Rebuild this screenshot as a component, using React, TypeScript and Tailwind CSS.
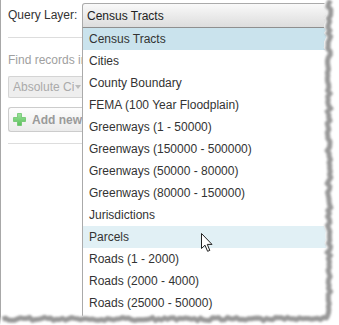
import React from "react";

const items = [
  "Census Tracts",
  "Cities",
  "County Boundary",
  "FEMA (100 Year Floodplain)",
  "Greenways (1 - 50000)",
  "Greenways (150000 - 500000)",
  "Greenways (50000 - 80000)",
  "Greenways (80000 - 150000)",
  "Jurisdictions",
  "Parcels",
  "Roads (1 - 2000)",
  "Roads (2000 - 4000)",
  "Roads (25000 - 50000)",
];

function rand(seed: number) {
  const x = Math.sin(seed * 12.9898) * 43758.5453;
  return x - Math.floor(x);
}

const RX = 325;
const BY = 316;
const rightPts: [number, number][] = [];
for (let y = 0; y <= BY; y += 3) rightPts.push([RX + (rand(y + 1) - 0.5) * 3.5, y]);
const bottomPts: [number, number][] = [];
for (let x = RX; x >= 0; x -= 3) bottomPts.push([x, BY + (rand(x + 500) - 0.5) * 3]);
const edge = [...rightPts, ...bottomPts];
const edgeStr = edge.map((p) => `${p[0].toFixed(1)},${p[1].toFixed(1)}`).join(" ");
const shadowStr = edge
  .map((p, i) => {
    const isRight = i < rightPts.length;
    return `${(p[0] + (isRight ? 4 : 1.5)).toFixed(1)},${(p[1] + (isRight ? 0.5 : 3)).toFixed(1)}`;
  })
  .join(" ");
const outside = `339,0 ${edgeStr} 0,325 339,325`;

function TornEdge() {
  return (
    <svg className="absolute left-0 top-0 pointer-events-none" width="339" height="325" viewBox="0 0 339 325">
      <defs>
        <filter id="blur" x="-10%" y="-10%" width="120%" height="120%">
          <feGaussianBlur stdDeviation="0.9" />
        </filter>
      </defs>
      <polygon points={outside} fill="#ffffff" />
      <polyline points={shadowStr} fill="none" stroke="#999999" strokeWidth="5" filter="url(#blur)" />
    </svg>
  );
}

function Cursor() {
  return (
    <svg className="absolute left-[201px] top-[233px] pointer-events-none" width="13" height="20" viewBox="0 0 13 20">
      <polygon points="0.5,0.5 0.5,15.5 4,12.2 6.6,18.3 8.8,17.4 6.3,11.4 11,11.4" fill="#ffffff" stroke="#222" strokeWidth="1" strokeLinejoin="round" />
    </svg>
  );
}

function PlusIcon() {
  return (
    <svg width="13" height="13" viewBox="0 0 13 13">
      <defs>
        <linearGradient id="pg" x1="0" y1="0" x2="0" y2="1">
          <stop offset="0" stopColor="#9be39b" />
          <stop offset="1" stopColor="#5cc05c" />
        </linearGradient>
      </defs>
      <path d="M4.5 0.5h4v4h4v4h-4v4h-4v-4h-4v-4h4z" fill="url(#pg)" stroke="#6cc46c" strokeWidth="0.8" />
    </svg>
  );
}

export default function App() {
  return (
    <div className="relative w-[339px] h-[325px] overflow-hidden bg-white font-['Liberation_Sans',Arial,sans-serif] text-[12px] text-[#333]">
      <div className="flex h-full">
        {/* left column */}
        <div className="w-[82px] shrink-0 border-l border-[#a8a8a8] pl-[7px] overflow-hidden">
          <div className="h-[30px] flex items-center whitespace-nowrap">Query Layer:</div>
          <div className="mt-[7px] h-px bg-[#dddddd]" />
          <div className="mt-[14px] h-[16px] leading-[16px] w-[74px] overflow-hidden whitespace-nowrap text-[#a0a0a0]">Find records in</div>
          <div className="mt-[8px] h-[22px] w-[76px] flex items-center border border-[#d4d4d4] border-r-0 rounded-l-[2px] bg-[#eeeeee] pl-[4px]">
            <span className="w-[61px] overflow-hidden whitespace-nowrap text-[#aaaaaa]">Absolute City Limits</span>
            <span className="ml-[1px] w-0 h-0 border-l-[3px] border-r-[3px] border-t-[4px] border-l-transparent border-r-transparent border-t-[#bbbbbb]" />
          </div>
          <div className="mt-[9px] h-[25px] w-[76px] flex items-center border border-[#cccccc] border-r-0 rounded-l-[3px] bg-gradient-to-b from-[#fdfdfd] to-[#ebebeb] pl-[4px] gap-[6px]">
            <PlusIcon />
            <span className="font-bold text-[#9a9a9a] w-[50px] overflow-hidden whitespace-nowrap">Add new</span>
          </div>
          <div className="mt-[11px] h-px bg-[#dddddd]" />
        </div>
        {/* right column */}
        <div className="flex-1 flex flex-col pt-[3px]">
          <div className="h-[25px] flex items-center border border-[#aaaaaa] border-b-[#8f8f8f] rounded-t-[3px] bg-gradient-to-b from-[#f9f9f9] to-[#dddddd] pl-[4px] text-[#222]">
            Census Tracts
          </div>
          <div className="flex-1 border-l border-[#aaaaaa] bg-white">
            {items.map((t, i) => (
              <div
                key={t}
                className={
                  "h-[22px] flex items-center pl-[6px] whitespace-nowrap " +
                  (i === 0 ? "bg-[#cae3ed]" : i === 9 ? "bg-[#e1f0f5]" : "")
                }
              >
                {t}
              </div>
            ))}
          </div>
        </div>
      </div>
      <Cursor />
      <TornEdge />
    </div>
  );
}
